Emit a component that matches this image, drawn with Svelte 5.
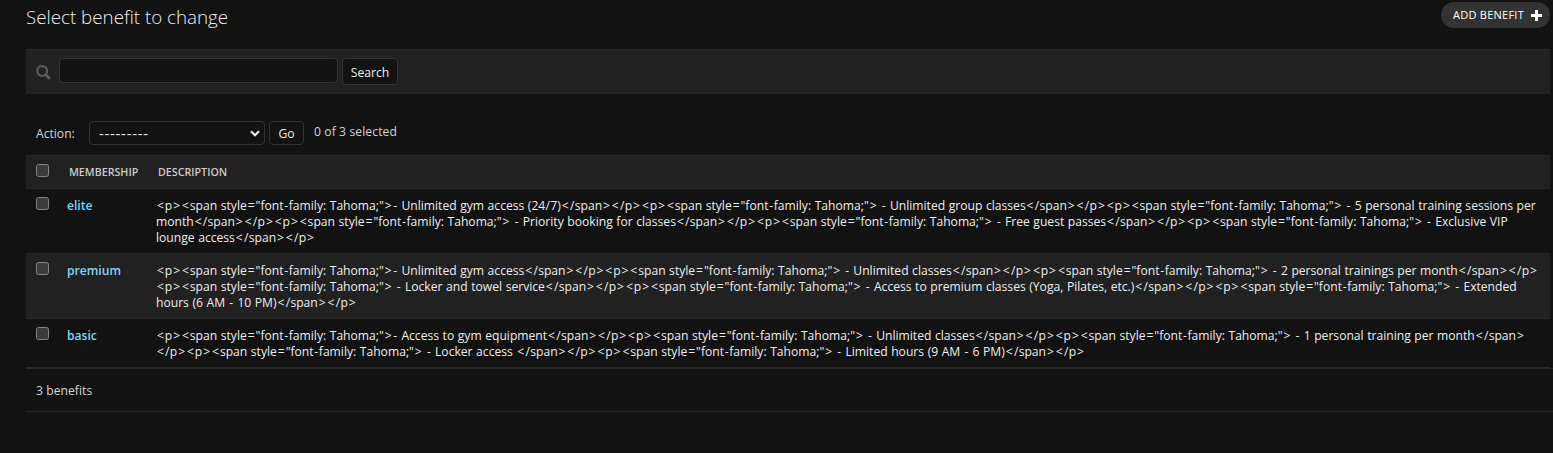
<script>
  const rows = [
    { name: 'elite', lines: [
      '<p><span style="font-family: Tahoma;">- Unlimited gym access (24/7)</span></p><p><span style="font-family: Tahoma;"> - Unlimited group classes</span></p><p><span style="font-family: Tahoma;"> - 5 personal training sessions per',
      'month</span></p><p><span style="font-family: Tahoma;"> - Priority booking for classes</span></p><p><span style="font-family: Tahoma;"> - Free guest passes</span></p><p><span style="font-family: Tahoma;"> - Exclusive VIP',
      'lounge access</span></p>'
    ] },
    { name: 'premium', lines: [
      '<p><span style="font-family: Tahoma;">- Unlimited gym access</span></p><p><span style="font-family: Tahoma;"> - Unlimited classes</span></p><p><span style="font-family: Tahoma;"> - 2 personal trainings per month</span></p>',
      '<p><span style="font-family: Tahoma;"> - Locker and towel service</span></p><p><span style="font-family: Tahoma;"> - Access to premium classes (Yoga, Pilates, etc.)</span></p><p><span style="font-family: Tahoma;"> - Extended',
      'hours (6 AM - 10 PM)</span></p>'
    ] },
    { name: 'basic', lines: [
      '<p><span style="font-family: Tahoma;">- Access to gym equipment</span></p><p><span style="font-family: Tahoma;"> - Unlimited classes</span></p><p><span style="font-family: Tahoma;"> - 1 personal training per month</span>',
      '</p><p><span style="font-family: Tahoma;"> - Locker access </span></p><p><span style="font-family: Tahoma;"> - Limited hours (9 AM - 6 PM)</span></p>'
    ] }
  ];
  const kinds = { '<': 'angle', '>': 'angle', '=': 'angle', '-': 'dash', '/': 'slash' };
  const tokens = (line) => line.split(/([<>=\-/])/).filter(Boolean);
</script>

<main>
  <header>
    <h1>Select benefit to change</h1>
    <a class="add" href="#add"><span>ADD BENEFIT</span>
      <svg width="11" height="11" viewBox="0 0 11 11"><path d="M4 0h3v4h4v3H7v4H4V7H0V4h4z" fill="#fff" /></svg>
    </a>
  </header>

  <form class="toolbar">
    <svg width="15" height="15" viewBox="0 0 15 15" fill="none" stroke="#5c5c5c"><circle cx="6.2" cy="6.1" r="4.9" stroke-width="2.2" /><path d="M9.8 9.7l3.3 3.3" stroke-width="2.7" stroke-linecap="round" /></svg>
    <input type="text" aria-label="Search" />
    <button type="button">Search</button>
  </form>

  <div class="actions">
    <span class="label">Action:</span>
    <div class="select"><span>---------</span>
      <svg width="10" height="7" viewBox="0 0 10 7" fill="none" stroke="#eee" stroke-width="2.2"><path d="M1 1.2l4 4 4-4" /></svg>
    </div>
    <button type="button">Go</button>
    <span class="counter">0 of 3 selected</span>
  </div>

  <div class="table">
    <div class="row head">
      <i class="check"></i><b>MEMBERSHIP</b><b>DESCRIPTION</b>
    </div>
    {#each rows as row}
      <div class="row">
        <i class="check"></i>
        <a href="#{row.name}">{row.name}</a>
        <div class="desc">
          {#each row.lines as line}
            <div class="line">{#each tokens(line) as t}<span class={kinds[t] ?? 'text'}>{t}</span>{/each}</div>
          {/each}
        </div>
      </div>
    {/each}
  </div>
  <div class="paginator">3 benefits</div>
</main>

<style>
  :global(body) { background: #121212; overflow: hidden; }
  main { box-sizing: border-box; height: 453px; padding-left: 26px; background: #121212; color: #eee; font: 12.14px/16px "Open Sans", "Noto Sans", sans-serif; overflow: hidden; }
  header { height: 49px; display: flex; justify-content: space-between; align-items: flex-start; padding-right: 3px; }
  h1 { margin: 5px 0 0; font-size: 18.75px; line-height: 24px; font-weight: 300; color: #eee; white-space: nowrap; }
  .add { box-sizing: border-box; margin-top: 2px; width: 109px; height: 26px; border-radius: 13px; background: #333; color: #fff; text-decoration: none; display: flex; align-items: center; justify-content: space-between; padding: 0 8px 0 12px; font-size: 11px; letter-spacing: 0.25px; white-space: nowrap; }
  .toolbar { box-sizing: border-box; height: 45px; margin-right: 3px; background: #212121; border: solid #272727; border-width: 1px 0; display: flex; align-items: flex-start; padding: 8px 0 0 10px; }
  .toolbar svg { margin-top: 7px; }
  input { box-sizing: border-box; width: 279px; height: 25px; margin: 0 4px 0 8px; background: #121212; border: 1px solid #353535; border-radius: 4px; padding: 0; }
  button { box-sizing: border-box; background: #121212; border: 1px solid #353535; border-radius: 4px; color: #eee; font: inherit; padding: 0; }
  .toolbar button { width: 56px; height: 27px; padding-top: 2px; }
  .actions { height: 61px; box-sizing: border-box; display: flex; align-items: flex-start; padding: 27px 0 0 10px; color: #d2d2d2; }
  .label { width: 53px; margin-top: 5px; }
  .select { box-sizing: border-box; width: 176px; height: 24px; border: 1px solid #353535; border-radius: 4px; display: flex; align-items: center; justify-content: space-between; padding: 0 4px 0 9px; color: #eee; }
  .select span { font-size: 15px; letter-spacing: 0.7px; }
  .actions button { width: 35px; height: 24px; margin-left: 4px; padding-top: 1px; }
  .counter { margin: 3px 0 0 10px; letter-spacing: 0.1px; }
  .table { margin-right: 3px; border-top: 1px solid #272727; }
  .row { display: grid; grid-template-columns: 31px 89px 1fr; align-items: start; padding: 8px 0 8px 10px; border-bottom: 1px solid #272727; }
  .row:nth-child(odd) { background: #212121; }
  .row.head { height: 16px; color: #ccc; }
  .check { box-sizing: border-box; width: 13px; height: 13px; border: 1px solid #858585; border-radius: 2.5px; background: #3b3b3b; }
  .row b { padding-left: 2px; font-size: 10.7px; font-weight: 600; }
  .row a { margin-top: 1px; color: #81d4fa; font-weight: 600; text-decoration: none; }
  .desc { margin: 1px 0 -1px; }
  .line { white-space: pre; height: 16px; }
  .angle { display: inline-block; width: 8.8px; text-align: center; }
  .dash { display: inline-block; width: 5.2px; text-align: center; }
  .slash { display: inline-block; width: 5.05px; text-align: center; }
  .text { word-spacing: 0.4px; }
  .paginator { box-sizing: border-box; height: 44px; border: solid #272727; border-width: 1px 0; padding: 14px 10px; color: #d2d2d2; letter-spacing: 0.05px; }
</style>
